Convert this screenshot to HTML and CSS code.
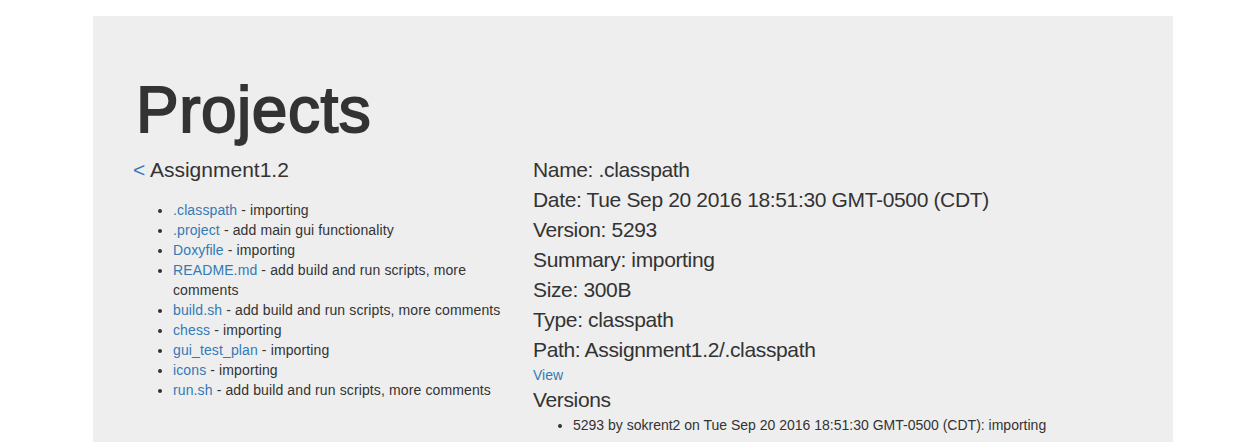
FILE: index.html
```html
<!DOCTYPE html>
<html>
<head>
<meta charset="utf-8">
<title>Projects</title>
<link rel="stylesheet" href="styles.css">
</head>
<body>
<div class="jumbotron">
  <h1 class="page-title">Projects</h1>
  <div class="row">
    <div class="col-left">
      <div class="crumb"><a href="#">&lt;</a> Assignment1.2</div>
      <ul class="file-list">
        <li><a href="#">.classpath</a> - importing</li>
        <li><a href="#">.project</a> - add main gui functionality</li>
        <li><a href="#">Doxyfile</a> - importing</li>
        <li><a href="#">README.md</a> - add build and run scripts, more comments</li>
        <li><a href="#">build.sh</a> - add build and run scripts, more comments</li>
        <li><a href="#">chess</a> - importing</li>
        <li><a href="#">gui_test_plan</a> - importing</li>
        <li><a href="#">icons</a> - importing</li>
        <li><a href="#">run.sh</a> - add build and run scripts, more comments</li>
      </ul>
    </div>
    <div class="col-right">
      <div class="info">Name: .classpath</div>
      <div class="info">Date: Tue Sep 20 2016 18:51:30 GMT-0500 (CDT)</div>
      <div class="info">Version: 5293</div>
      <div class="info">Summary: importing</div>
      <div class="info">Size: 300B</div>
      <div class="info">Type: classpath</div>
      <div class="info">Path: Assignment1.2/.classpath</div>
      <div class="view"><a href="#">View</a></div>
      <div class="info">Versions</div>
      <ul class="version-list">
        <li>5293 by sokrent2 on Tue Sep 20 2016 18:51:30 GMT-0500 (CDT): importing</li>
      </ul>
    </div>
  </div>
</div>
</body>
</html>
```

FILE: styles.css
```css
html, body {
  margin: 0;
  padding: 0;
  background: #fff;
}
body {
  font-family: "Liberation Sans", Arial, sans-serif;
  font-size: 14px;
  line-height: 20px;
  color: #333;
}
a {
  color: #337ab7;
  text-decoration: none;
}
.jumbotron {
  margin: 16px 0 0 93px;
  width: 1080px;
  box-sizing: border-box;
  background: #eee;
  padding: 40px 40px 48px 40px;
}
.page-title {
  margin: 20px 0 10px 0;
  font-size: 64px;
  line-height: 69px;
  font-weight: 400;
  color: #333;
  letter-spacing: 0.5px;
  -webkit-text-stroke: 1.8px #333;
  padding-left: 3px;
}
.row {
  display: flex;
}
.col-left {
  width: 370px;
  margin-right: 30px;
}
.col-right {
  flex: 1;
}
.crumb {
  font-size: 21px;
  line-height: 30px;
}
.file-list {
  margin: 15px 0 0 0;
  padding-left: 40px;
  letter-spacing: 0.12px;
}
.info {
  font-size: 21px;
  line-height: 30px;
  letter-spacing: -0.35px;
}
.view {
  font-size: 14px;
  line-height: 20px;
}
.version-list {
  margin: 0;
  padding-left: 40px;
}
```
